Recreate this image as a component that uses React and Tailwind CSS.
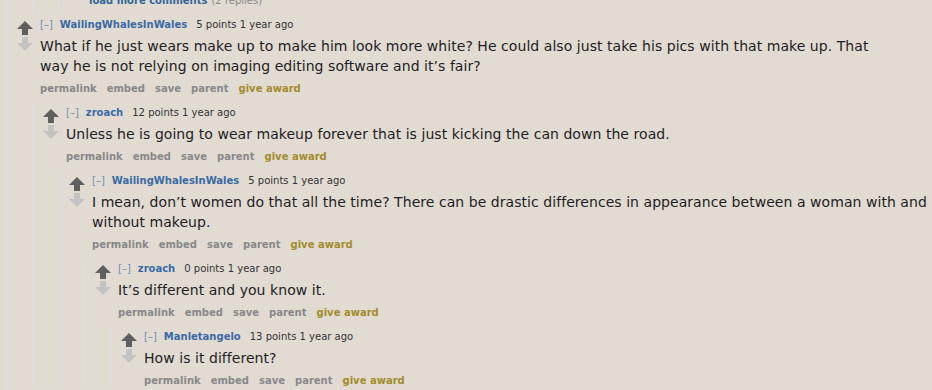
import React from "react";

const FONT = { fontFamily: '"DejaVu Sans", Verdana, sans-serif' };

function Up() {
  return (
    <svg width="16" height="14" viewBox="0 0 16 14" className="block">
      <polygon points="8,0 16,8 11,8 11,14 5,14 5,8 0,8" fill="#5f5f5f" />
    </svg>
  );
}
function Down() {
  return (
    <svg width="16" height="14" viewBox="0 0 16 14" className="block">
      <polygon points="5,0 11,0 11,6 16,6 8,14 0,6 5,6" fill="#c3c3c3" />
    </svg>
  );
}

function Comment({ author, points, body, children }) {
  return (
    <div>
      <div className="flex">
        <div className="ml-[10px] w-[16px] pt-[3px] flex flex-col gap-[2px] shrink-0">
          <Up />
          <Down />
        </div>
        <div className="ml-[7px]">
          <div className="h-[14px] leading-[14px] text-[10px] flex whitespace-nowrap">
            <span className="text-[#6f8fb8]">[–]</span>
            <span className="ml-[7px] font-bold text-[#3a6aa6]">{author}</span>
            <span className="ml-[9px] text-[#333]">{points} points 1 year ago</span>
          </div>
          <div className="mt-[4px] text-[14px] leading-[20px] text-[#1e1e24] max-w-[840px] tracking-[0.05px]">
            {body}
          </div>
          <div className="mt-[6px] h-[14px] leading-[14px] text-[10px] font-bold flex gap-[10px] whitespace-nowrap">
            <span className="text-[#888]">permalink</span>
            <span className="text-[#888]">embed</span>
            <span className="text-[#888]">save</span>
            <span className="text-[#888]">parent</span>
            <span className="text-[#a38c2c]">give award</span>
          </div>
        </div>
      </div>
      {children && (
        <div className="ml-[25px] mt-[10px] border-l border-dotted border-[#ddddff]">
          {children}
        </div>
      )}
    </div>
  );
}

export default function App() {
  return (
    <div className="w-[932px] h-[390px] overflow-hidden bg-[#e2dbd2]" style={FONT}>
      <div className="ml-[6px] h-full border-l border-dotted border-[#ddddff]">
        <div className="ml-[25px] h-[14px] border-l border-dotted border-[#ddddff]">
          <div className="ml-[25px] h-full border-l border-dotted border-[#ddddff]">
            <div className="relative -top-[6px] pl-[30px] text-[10px] leading-[14px] whitespace-nowrap">
              <span className="font-bold text-[#336699]">load more comments</span>
              <span className="ml-[4px] text-[#888]">(2 replies)</span>
            </div>
          </div>
        </div>
        <div className="pt-[4px]">
          <Comment
            author="WailingWhalesInWales"
            points="5"
            body="What if he just wears make up to make him look more white? He could also just take his pics with that make up. That way he is not relying on imaging editing software and it’s fair?"
          >
            <Comment
              author="zroach"
              points="12"
              body="Unless he is going to wear makeup forever that is just kicking the can down the road."
            >
              <Comment
                author="WailingWhalesInWales"
                points="5"
                body="I mean, don’t women do that all the time? There can be drastic differences in appearance between a woman with and without makeup."
              >
                <Comment
                  author="zroach"
                  points="0"
                  body="It’s different and you know it."
                >
                  <Comment
                    author="Manletangelo"
                    points="13"
                    body="How is it different?"
                  />
                </Comment>
              </Comment>
            </Comment>
          </Comment>
        </div>
      </div>
    </div>
  );
}
